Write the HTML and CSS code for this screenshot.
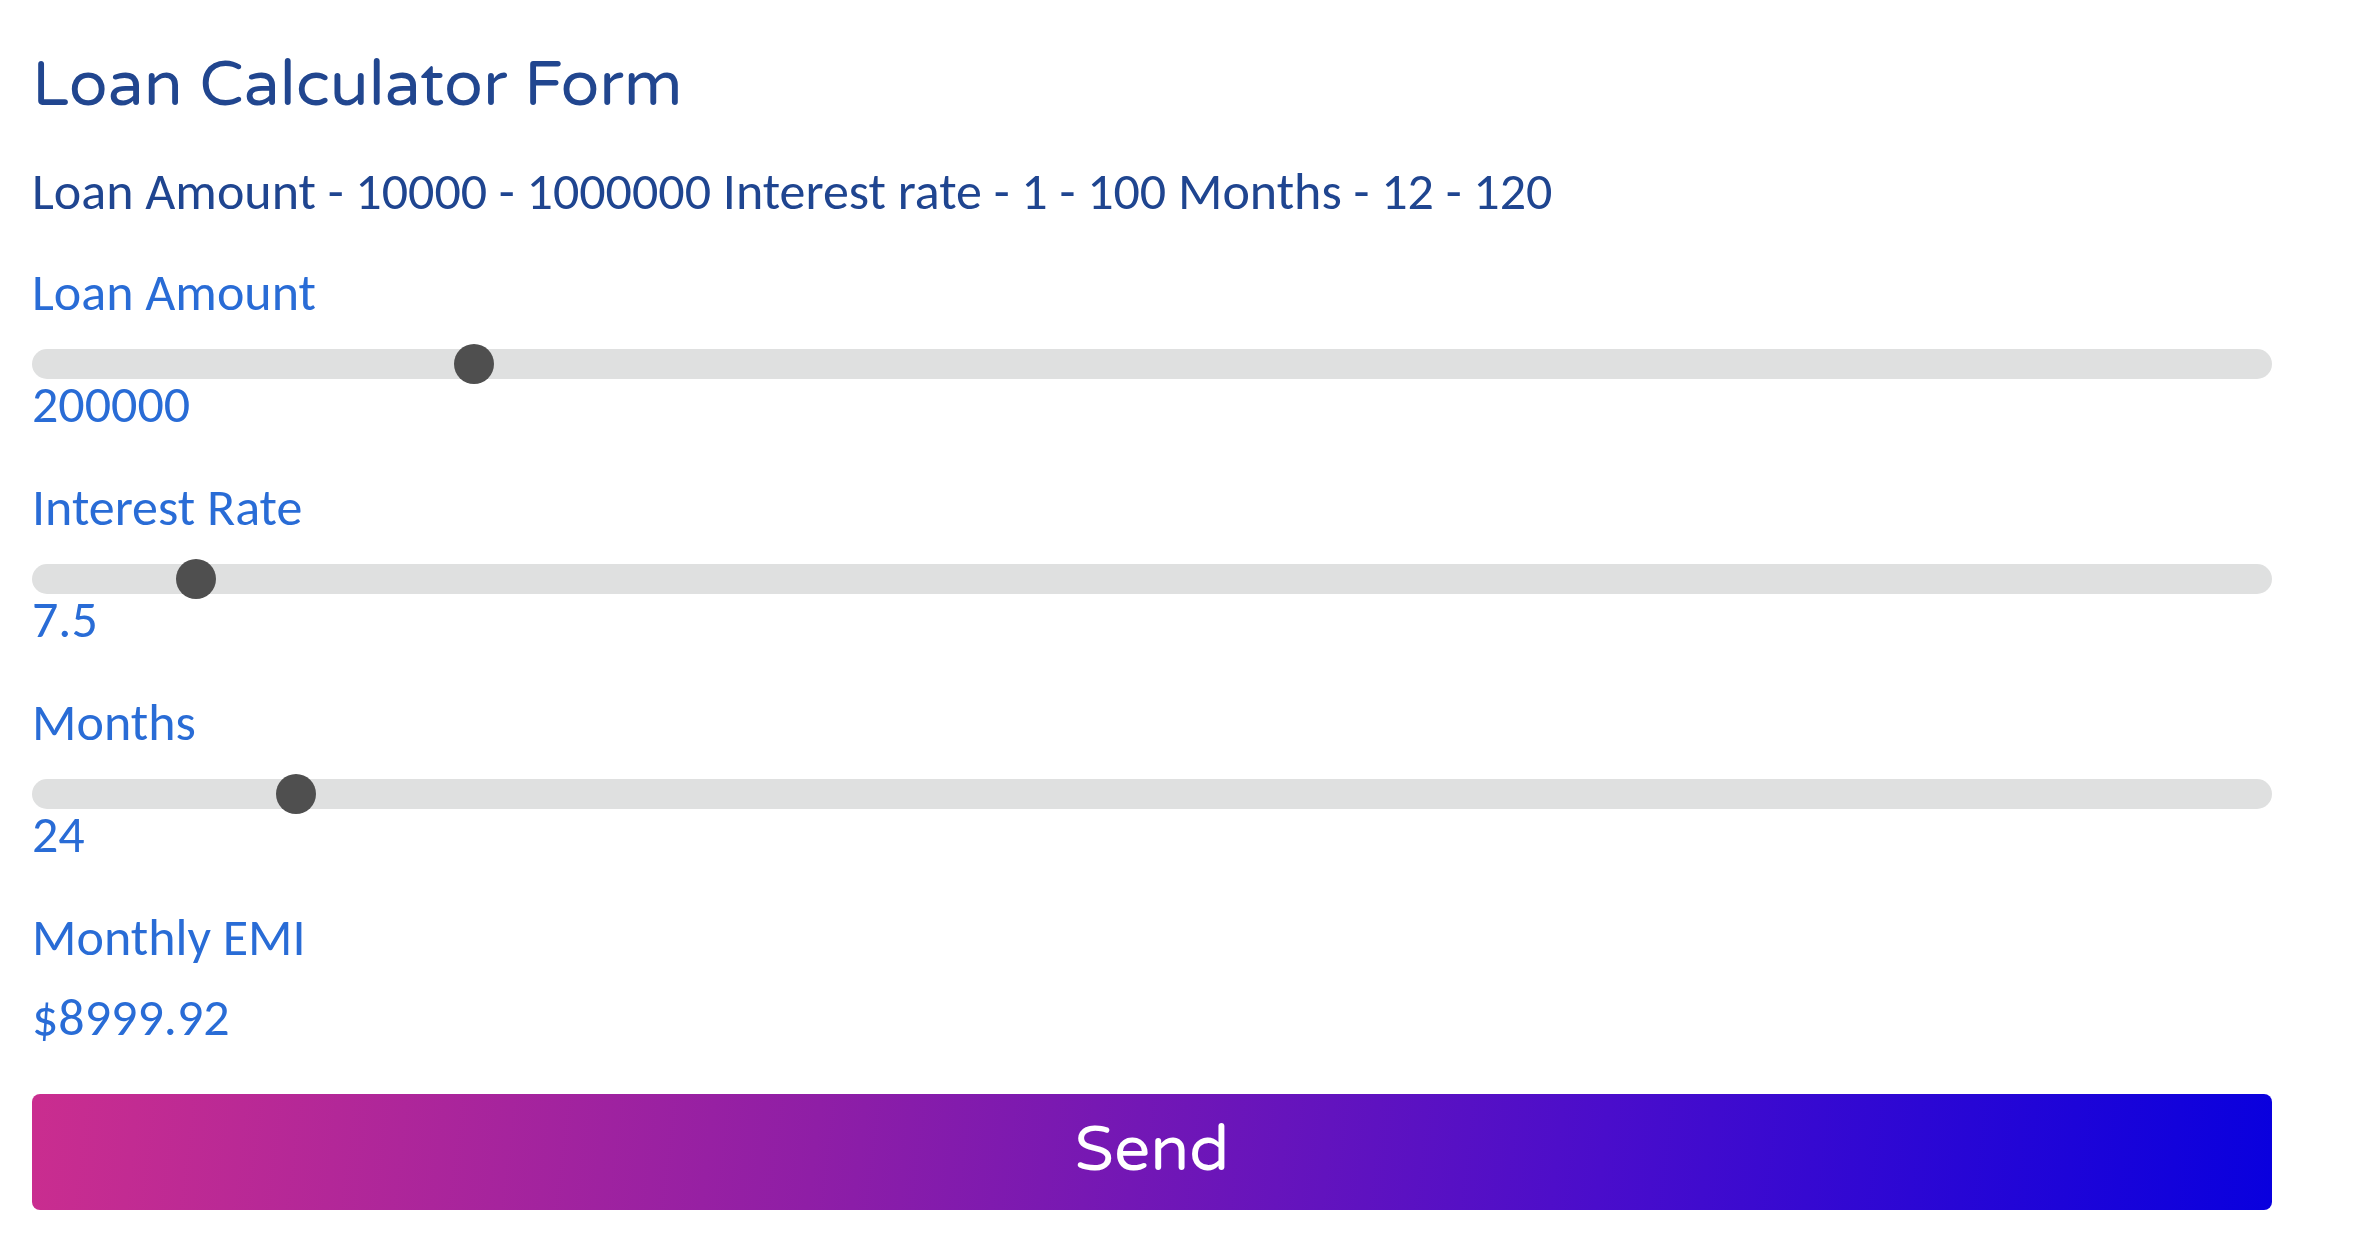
FILE: index.html
```html
<!DOCTYPE html>
<html lang="en">
<head>
<meta charset="utf-8">
<title>Loan Calculator Form</title>
<link rel="stylesheet" href="styles.css">
</head>
<body>
<main class="calc">
  <h1 class="calc-title">Loan Calculator Form</h1>
  <p class="calc-info">Loan Amount - 10000 - 1000000 Interest rate - 1 - 100 Months - 12 - 120</p>
  <div class="field">
    <label class="field-label" for="amount">Loan Amount</label>
    <input class="slider" id="amount" type="range" min="10000" max="1000000" value="200000">
    <div class="field-value">200000</div>
  </div>
  <div class="field">
    <label class="field-label" for="rate">Interest Rate</label>
    <input class="slider" id="rate" type="range" min="1" max="100" step="0.5" value="7.5">
    <div class="field-value">7.5</div>
  </div>
  <div class="field">
    <label class="field-label" for="months">Months</label>
    <input class="slider" id="months" type="range" min="12" max="120" value="24">
    <div class="field-value">24</div>
  </div>
  <div class="result">
    <div class="field-label">Monthly EMI</div>
    <div class="result-value">$8999.92</div>
  </div>
  <button class="send" type="button">Send</button>
</main>
</body>
</html>
```
FILE: styles.css
```css
html, body {
  margin: 0;
  padding: 0;
  background: #ffffff;
}

.calc {
  display: flex;
  flex-direction: column;
  padding: 53px 100px 0 32px;
  font-family: "Carlito", "Calibri", "Liberation Sans", sans-serif;
  font-size: 52px;
  line-height: 1;
}

.calc-title {
  margin: 0;
  font-family: "Varela Round", "Nunito", "Lato", sans-serif;
  font-weight: 400;
  font-size: 64px;
  line-height: 1;
  color: #21468f;
}

.calc-info {
  margin: 47.5px 0 -1.5px;
  color: #1f4590;
}

.field {
  display: flex;
  flex-direction: column;
  margin-top: 51px;
}

.field-label {
  display: block;
  color: #296cd6;
}

.slider {
  -webkit-appearance: none;
  appearance: none;
  display: block;
  width: 100%;
  height: 30px;
  margin: 31px 0 0;
  padding: 0;
  background: transparent;
}

.slider::-webkit-slider-runnable-track {
  height: 30px;
  background: #dfe0e0;
  border-radius: 15px;
  border: none;
}

.slider::-webkit-slider-thumb {
  -webkit-appearance: none;
  appearance: none;
  width: 40px;
  height: 40px;
  margin-top: -5px;
  border-radius: 50%;
  background: #4f4f4f;
  border: none;
}

.field-value {
  margin-top: -1px;
  color: #296cd6;
}

.result {
  display: flex;
  flex-direction: column;
  margin-top: 51px;
}

.result-value {
  margin-top: 27.5px;
  color: #296cd6;
}

.send {
  display: flex;
  align-items: center;
  justify-content: center;
  height: 116px;
  margin-top: 51px;
  padding: 0 0 4px;
  border: none;
  border-radius: 8px;
  background: linear-gradient(97deg, #ca2d8f 0%, #8f1ea6 35%, #4a0dcb 70%, #0900de 100%);
  color: #ffffff;
  font-family: "Varela Round", "Nunito", "Lato", sans-serif;
  font-size: 64px;
  line-height: 1;
}
```
